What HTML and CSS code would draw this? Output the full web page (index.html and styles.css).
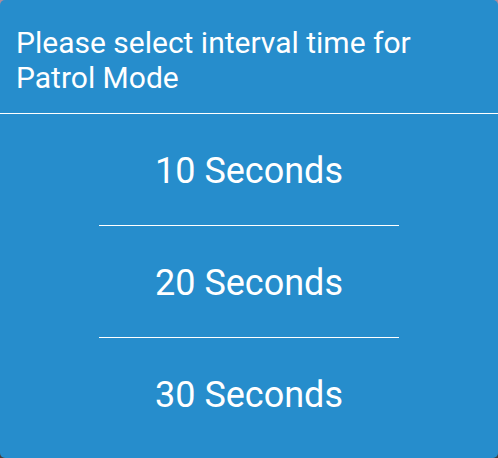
FILE: index.html
```html
<!DOCTYPE html>
<html lang="en">
<head>
    <meta charset="UTF-8">
    <meta name="viewport" content="width=device-width, initial-scale=1.0">
    <title>Patrol Mode</title>
    <link rel="stylesheet" href="styles.css">
</head>
<body>
    <div class="dialog">
        <header class="dialog-title">
            Please select interval time for Patrol Mode
        </header>

        <!-- Interval options -->
        <ul class="options">
            <li class="option">10 Seconds</li>
            <li class="option">20 Seconds</li>
            <li class="option">30 Seconds</li>
        </ul>
    </div>
</body>
</html>
```

FILE: styles.css
```css
:root {
    --dialog-blue: #268dcc;
    --text-color: #ffffff;
}

* {
    margin: 0;
    padding: 0;
    box-sizing: border-box;
}

html, body {
    height: 100%;
}

body {
    font-family: Roboto, 'Noto Sans', sans-serif;
    background: linear-gradient(to bottom, #b08c9c 0%, #6a5f6a 50%, #404040 100%);
    color: var(--text-color);
}

.dialog {
    height: 100%;
    background-color: var(--dialog-blue);
    border-radius: 5px;
    display: flex;
    flex-direction: column;
}

.dialog-title {
    font-size: 30px;
    line-height: 35px;
    padding: 25px 16px 18px 16px;
    border-bottom: 1px solid var(--text-color);
}

.options {
    list-style: none;
    display: flex;
    flex-direction: column;
    align-items: center;
}

.option {
    width: 300px;
    height: 112px;
    padding-top: 2px;
    font-size: 36px;
    display: flex;
    align-items: center;
    justify-content: center;
    border-bottom: 1px solid var(--text-color);
}

.option:last-child {
    border-bottom: none;
}
```
